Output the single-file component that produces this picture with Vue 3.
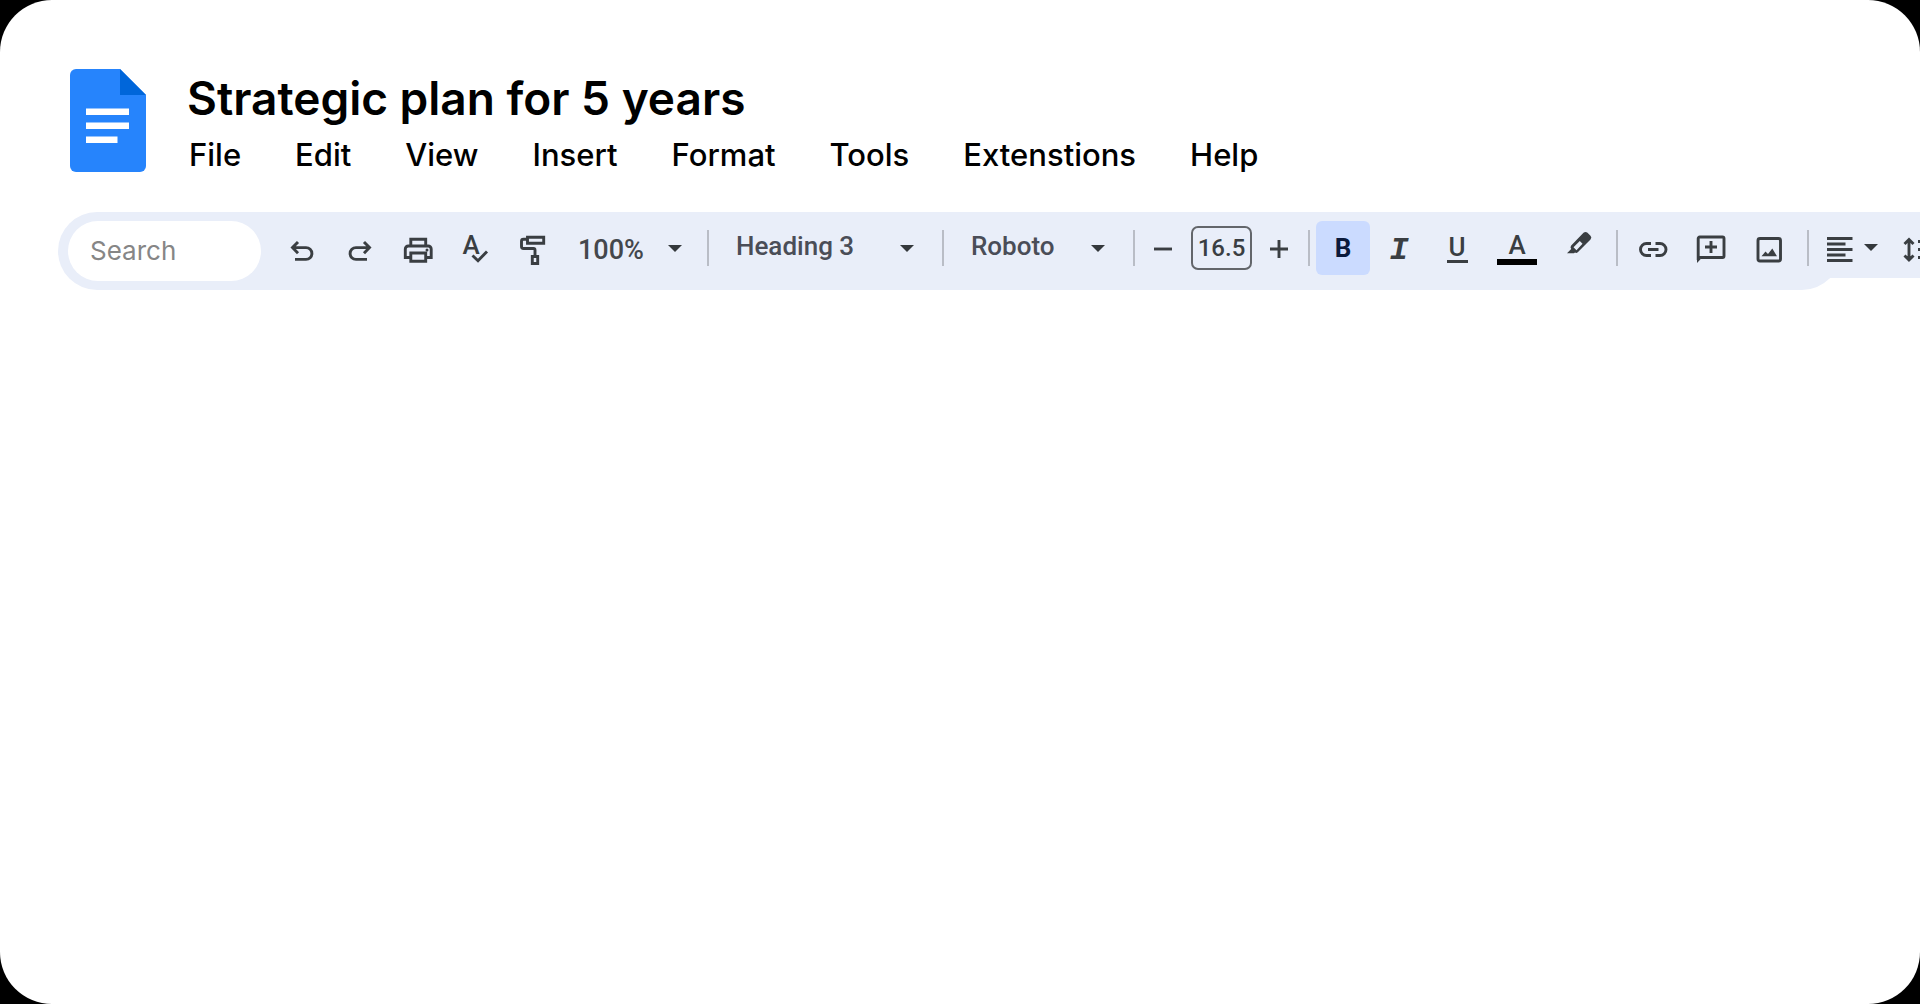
<script setup>
import { ref } from "vue"

const menus = ["File", "Edit", "View", "Insert", "Format", "Tools", "Extenstions", "Help"]

const search = ref("")
const zoom = ref("100%")
const heading = ref("Heading 3")
const font = ref("Roboto")
const fontSize = ref("16.5")
const bold = ref(true)

const changeSize = (step) => {
    fontSize.value = String(Number(fontSize.value) + step)
}
</script>

<template>
    <div class="page">
        <!-- HEADER -->
        <header class="header">
            <svg class="logo" viewBox="0 0 76 103" aria-hidden="true">
                <path d="M6 0H50L76 26V97a6 6 0 0 1-6 6H6a6 6 0 0 1-6-6V6a6 6 0 0 1 6-6z" fill="#2684fc" />
                <path d="M50 0L76 26H50z" fill="#0066da" />
                <path d="M16 39.500H59V46H16zM16 53.500H59V60H16zM16 67.500H47.500V74H16z" fill="#fff" />
            </svg>
            <div class="heading">
                <h1>Strategic plan for 5 years</h1>
                <nav class="menu">
                    <button v-for="item in menus" :key="item" type="button">{{ item }}</button>
                </nav>
            </div>
        </header>

        <!-- TOOLBAR -->
        <div class="toolbar" role="toolbar">
            <div class="search-box">
                <input v-model="search" type="text" placeholder="Search" aria-label="Search" />
            </div>

            <div class="tools">
                <button type="button" class="tool" aria-label="Undo">
                    <svg viewBox="0 0 32 32"><path d="M12 10L6.500 15.600L12 21.200M7 15.600H20a5.900 5.900 0 0 1 0 11.800H9" /></svg>
                </button>
                <button type="button" class="tool" aria-label="Redo">
                    <svg viewBox="0 0 32 32"><path d="M20 10L25.500 15.600L20 21.200M25 15.600H12a5.900 5.900 0 0 0 0 11.800H23" /></svg>
                </button>
                <button type="button" class="tool" aria-label="Print">
                    <svg viewBox="0 0 32 32">
                        <path d="M8.800 13.500V7.300H23.700V13.500M8.800 25.500H3.300V17a3 3 0 0 1 3-3H26.200a3 3 0 0 1 3 3V25.500H23.700M8.800 21H23.700V29.200H8.800z" />
                        <circle class="solid" cx="25" cy="18" r="1.500" />
                    </svg>
                </button>
                <button type="button" class="tool" aria-label="Spelling and grammar check">
                    <svg viewBox="1 0 32 32">
                        <text x="12" y="22" text-anchor="middle">A</text>
                        <path d="M13.500 23.500L19 28.700L28 19.500" />
                    </svg>
                </button>
                <button type="button" class="tool" aria-label="Paint format">
                    <svg viewBox="2 0 32 32">
                        <path d="M11.500 5.300H27.700V11.200H11.500zM11.500 7.300H7.500a2 2 0 0 0-2 2V14.500a2 2 0 0 0 2 2H17.500a1.500 1.500 0 0 1 1.500 1.500V25M16.300 24.500H21.700V31.500H16.300z" />
                    </svg>
                </button>

                <label class="field zoom">
                    <select v-model="zoom" aria-label="Zoom">
                        <option>50%</option>
                        <option>100%</option>
                        <option>200%</option>
                    </select>
                    <svg class="caret" viewBox="0 0 14 8"><path d="M0 0H14L7 7z" /></svg>
                </label>
                <span class="divider"></span>
                <label class="field style">
                    <select v-model="heading" aria-label="Styles">
                        <option>Heading 1</option>
                        <option>Heading 2</option>
                        <option>Heading 3</option>
                    </select>
                    <svg class="caret" viewBox="0 0 14 8"><path d="M0 0H14L7 7z" /></svg>
                </label>
                <span class="divider"></span>
                <label class="field font">
                    <select v-model="font" aria-label="Font">
                        <option>Roboto</option>
                        <option>Inter</option>
                    </select>
                    <svg class="caret" viewBox="0 0 14 8"><path d="M0 0H14L7 7z" /></svg>
                </label>
                <span class="divider"></span>

                <button type="button" class="tool step" aria-label="Decrease font size" @click="changeSize(-1)">
                    <svg viewBox="0 0 32 32"><path d="M7 17H25" /></svg>
                </button>
                <input v-model="fontSize" class="size" type="text" aria-label="Font size" />
                <button type="button" class="tool step" aria-label="Increase font size" @click="changeSize(1)">
                    <svg viewBox="0 0 32 32"><path d="M6 17H24M15 8V26" /></svg>
                </button>
                <span class="divider"></span>

                <div class="group">
                    <button type="button" class="bold" :class="{ active: bold }" aria-label="Bold" @click="bold = !bold">B</button>
                    <button type="button" class="tool italic" aria-label="Italic">I</button>
                    <button type="button" class="tool" aria-label="Underline"><span class="underline">U</span></button>
                    <button type="button" class="tool wide" aria-label="Text color"><span class="text-color">A</span></button>
                    <button type="button" class="tool wide" aria-label="Highlight color">
                        <svg viewBox="0 0 32 32">
                            <path class="solid" fill-rule="evenodd" d="M20.500 0.800Q22.500-1 24.500 0.800L27.500 3.800Q29.200 5.600 27.500 7.500L15 20Q13.500 21.500 12 20.500L11 21.300H4L8.200 17Q6.800 15.200 8.200 13.500zM10.500 15.200L13.500 18.200L19.500 11.700L16.800 9z" />
                        </svg>
                    </button>
                </div>
                <span class="divider"></span>

                <div class="group insert">
                    <button type="button" class="tool" aria-label="Insert link">
                        <svg viewBox="0 0 32 32"><path d="M14 11.500H9.500a6 6 0 0 0 0 12H14M18.500 11.500H23a6 6 0 0 1 0 12H18.500M11 17.500H21.500" /></svg>
                    </button>
                    <button type="button" class="tool" aria-label="Add comment">
                        <svg viewBox="0 0 32 32">
                            <path d="M3.200 28V6.500a1.500 1.500 0 0 1 1.500-1.500H27.500a1.500 1.500 0 0 1 1.500 1.500V24a1.500 1.500 0 0 1-1.500 1.500H6M16 9V21M10 15H22" />
                            <path class="solid" d="M2 24H8.500L2 31z" />
                        </svg>
                    </button>
                    <button type="button" class="tool" aria-label="Insert image">
                        <svg viewBox="0 0 32 32">
                            <rect x="5" y="6.500" width="22.500" height="22.500" rx="2" />
                            <path class="solid" d="M8.500 24.300L12.500 19.500L15 22L19.300 16.500L24 24.300z" />
                        </svg>
                    </button>
                </div>
                <span class="divider"></span>

                <div class="group paragraph">
                    <button type="button" class="tool align" aria-label="Align">
                        <svg viewBox="0 0 32 32"><path d="M3 6.500H28.500M3 12H21.500M3 17.500H28.500M3 23H21.500M3 28.500H28.500" /></svg>
                        <svg class="caret" viewBox="0 0 14 8"><path d="M0 0H14L7 7z" /></svg>
                    </button>
                    <button type="button" class="tool" aria-label="Line spacing">
                        <svg viewBox="0 0 32 32"><path d="M7 8V27.500M2.500 12L7 7.500L11.500 12M2.500 23.500L7 28L11.500 23.500M16 9.500H30M16 17.500H30M16 25.500H30" /></svg>
                    </button>
                </div>
            </div>
        </div>

        <main class="document"></main>
    </div>
</template>

<style>
body {
    margin: 0;
    background: #000000;
}
</style>

<style scoped>
.page {
    box-sizing: border-box;
    min-height: 100vh;
    padding-top: 69px;
    border-radius: 52px;
    background: #ffffff;
    overflow: hidden;
    font-family: Inter, sans-serif;
}

button,
input,
select {
    box-sizing: border-box;
    margin: 0;
    padding: 0;
    border: none;
    background: none;
    font: inherit;
    color: inherit;
}

button {
    cursor: pointer;
}

/* HEADER */
.header {
    display: flex;
    gap: 41px;
    padding-left: 70px;
}

.logo {
    flex: none;
    width: 76px;
    height: 103px;
}

h1 {
    margin: 0;
    font-size: 46px;
    font-weight: 600;
    line-height: 58px;
    color: #000000;
}

.menu {
    display: flex;
    gap: 54px;
    padding-left: 2px;
    font-size: 31px;
    font-weight: 500;
    line-height: 56px;
}

/* TOOLBAR */
.toolbar {
    box-sizing: border-box;
    display: flex;
    height: 78px;
    margin: 29px 79px 0 58px;
    border-radius: 39px;
    background: #e9eef9;
    color: #3a3e42;
}

.search-box {
    flex: none;
    width: 193px;
    padding: 9px 12px 9px 10px;
}

.search-box input {
    width: 100%;
    height: 60px;
    padding: 0 22px 2px;
    border-radius: 30px;
    background: #ffffff;
    font-size: 26px;
}

.search-box input::placeholder {
    color: #868686;
    opacity: 1;
}

.tools {
    box-sizing: border-box;
    flex: none;
    display: flex;
    align-items: center;
    height: 66px;
    padding-top: 6px;
    background: #e9eef9;
    font-family: Roboto, sans-serif;
    font-size: 26px;
    font-weight: 500;
}

.tool {
    flex: none;
    display: flex;
    align-items: center;
    justify-content: center;
    width: 58px;
    height: 54px;
}

.tool.wide {
    width: 62px;
}

.tool.step {
    width: 56px;
}

.tool svg {
    flex: none;
    width: 32px;
    height: 32px;
    overflow: visible;
    fill: none;
    stroke: currentColor;
    stroke-width: 2.9;
}

.tool svg text,
.tool svg .solid {
    fill: currentColor;
    stroke: none;
}

.field {
    position: relative;
    display: flex;
    color: #4a4d57;
}

.field select {
    appearance: none;
    width: 100%;
    height: 54px;
    padding-left: 27px;
    padding-bottom: 4px;
}

.field.zoom {
    width: 144px;
    color: #44474c;
}

.field.zoom select {
    padding: 4px 0 0 15px;
    font-size: 27px;
}

.field.style {
    width: 233px;
}

.field.font {
    width: 189px;
}

.caret,
.tool .caret {
    width: 14px;
    height: 8px;
    fill: #34383c;
    stroke: none;
}

.field .caret {
    position: absolute;
    top: 24px;
    right: 28px;
    pointer-events: none;
}

.field.zoom .caret {
    right: 25px;
}

.divider {
    flex: none;
    width: 2px;
    height: 36px;
    background: #b9bdc6;
}

.size {
    width: 61px;
    height: 44px;
    border: 2px solid #63666b;
    border-radius: 7px;
    font-size: 24px;
    text-align: center;
}

.group {
    display: flex;
    padding: 0 6px;
}

.group.insert {
    padding-right: 9px;
}

.group.paragraph {
    padding-left: 4px;
}

.bold {
    width: 54px;
    height: 54px;
    border-radius: 6px;
    font-weight: 700;
}

.bold.active {
    background: #cbdbff;
    color: #0b1a3c;
}

.italic {
    padding-top: 4px;
    font-family: "Liberation Mono", monospace;
    font-size: 32px;
    font-style: italic;
    font-weight: 700;
}

.underline {
    width: 21px;
    border-bottom: 3px solid #3a3e42;
    line-height: 26px;
}

.text-color {
    width: 40px;
    border-bottom: 6px solid #000000;
    line-height: 28px;
}

.tool.align {
    width: 76px;
    gap: 8px;
}

.document {
    min-height: 600px;
}
</style>
